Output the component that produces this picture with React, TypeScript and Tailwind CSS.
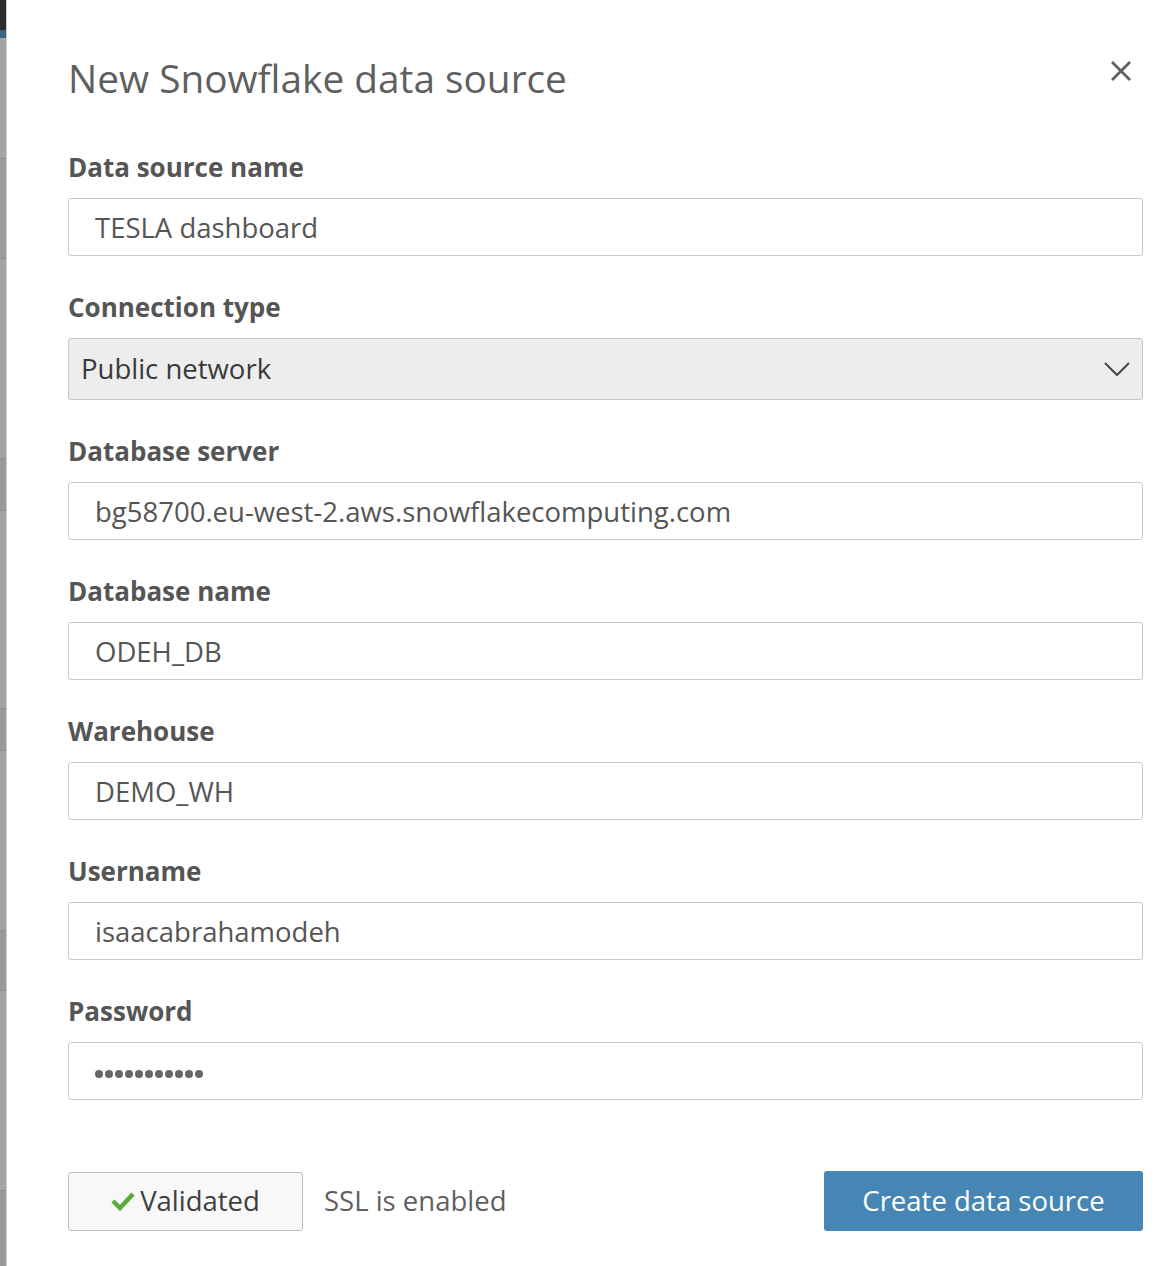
import React from "react";

const font = { fontFamily: '"Open Sans", "Noto Sans", sans-serif' };

function Field({ label, value }: { label: string; value: string }) {
  return (
    <div className="flex flex-col">
      <div className="h-[62px] flex items-center text-[26px] font-bold text-[#555] pt-[1px]">{label}</div>
      <div className="h-[58px] border border-[#c9c9c9] rounded-[3px] flex items-center px-[26px] pt-[1px] text-[27.5px] text-[#555] bg-white">
        {value}
      </div>
    </div>
  );
}

export default function App() {
  return (
    <div className="flex w-[1176px] h-[1266px] bg-white overflow-hidden" style={font}>
      <div className="w-[7px] flex flex-col border-r border-[#cfcfcf] bg-[#a4a4a4]">
        <div className="h-[30px] bg-[#2c2c2c]" />
        <div className="h-[8px] bg-[#3b6483]" />
        <div className="h-[120px]" />
        <div className="h-[100px] border-t border-[#8e8e8e] bg-[#9c9c9c]" />
        <div className="h-[200px] border-t border-[#8e8e8e]" />
        <div className="h-[52px] border-t border-[#8e8e8e] bg-[#9a9a9a]" />
        <div className="h-[198px] border-t border-[#8e8e8e]" />
        <div className="h-[42px] border-t border-[#8e8e8e] bg-[#9a9a9a]" />
        <div className="h-[180px] border-t border-[#8e8e8e]" />
        <div className="h-[60px] border-t border-[#8e8e8e] bg-[#9a9a9a]" />
        <div className="h-[200px] border-t border-[#8e8e8e]" />
        <div className="flex-1 border-t border-[#8e8e8e] bg-[#9a9a9a]" />
      </div>
      <div className="flex-1 flex flex-col pl-[61px] pr-[33px] bg-white">
        <div className="flex items-start justify-between pt-[51px] h-[136px]">
          <h1 className="text-[38.8px] text-[#5f5f5f] leading-[54px]">New Snowflake data source</h1>
          <svg width="20" height="20" viewBox="0 0 20 20" className="mt-[10px] mr-[12px]">
            <path d="M2 2 L18 18 M18 2 L2 18" stroke="#5f5f5f" strokeWidth="2.8" strokeLinecap="square" />
          </svg>
        </div>
        <div className="flex flex-col gap-[20px]">
          <Field label="Data source name" value="TESLA dashboard" />
          <div className="flex flex-col">
            <div className="h-[62px] flex items-center text-[26px] font-bold text-[#555] pt-[1px]">Connection type</div>
            <div className="h-[62px] border border-[#c4c4c4] rounded-[3px] flex items-center justify-between pl-[12px] pr-[12px] text-[27.5px] text-[#3a3a3a] bg-[#ededed]">
              <span>Public network</span>
              <svg width="26" height="14" viewBox="0 0 26 14">
                <path d="M1 1 L13 13 L25 1" stroke="#444" strokeWidth="2" fill="none" />
              </svg>
            </div>
          </div>
          <Field label="Database server" value="bg58700.eu-west-2.aws.snowflakecomputing.com" />
          <Field label="Database name" value="ODEH_DB" />
          <Field label="Warehouse" value="DEMO_WH" />
          <Field label="Username" value="isaacabrahamodeh" />
          <div className="flex flex-col">
            <div className="h-[62px] flex items-center text-[26px] font-bold text-[#555] pt-[1px]">Password</div>
            <div className="h-[58px] border border-[#c9c9c9] rounded-[3px] flex items-center px-[26px] pt-[6px] bg-white">
              <div className="flex gap-[2px]">
                {Array.from({ length: 11 }).map((_, i) => (
                  <span key={i} className="w-[8px] h-[8px] rounded-full bg-[#666]" />
                ))}
              </div>
            </div>
          </div>
        </div>
        <div className="flex items-center justify-between mt-[71px]">
          <div className="flex items-center gap-[21px]">
            <div className="w-[235px] h-[59px] border border-[#bdbdbd] rounded-[3px] bg-[#f8f8f8] flex items-center justify-center gap-[5px] text-[27.5px] text-[#3f3f3f]">
              <svg width="24" height="20" viewBox="0 0 24 20">
                <path d="M2 10 L9 17 L22 3" stroke="#5aab3c" strokeWidth="4.5" fill="none" />
              </svg>
              <span>Validated</span>
            </div>
            <span className="text-[27.5px] text-[#5f5f5f]">SSL is enabled</span>
          </div>
          <div className="w-[319px] h-[60px] rounded-[3px] bg-[#4686b5] flex items-center justify-center text-[27.5px] text-white">
            Create data source
          </div>
        </div>
      </div>
    </div>
  );
}
